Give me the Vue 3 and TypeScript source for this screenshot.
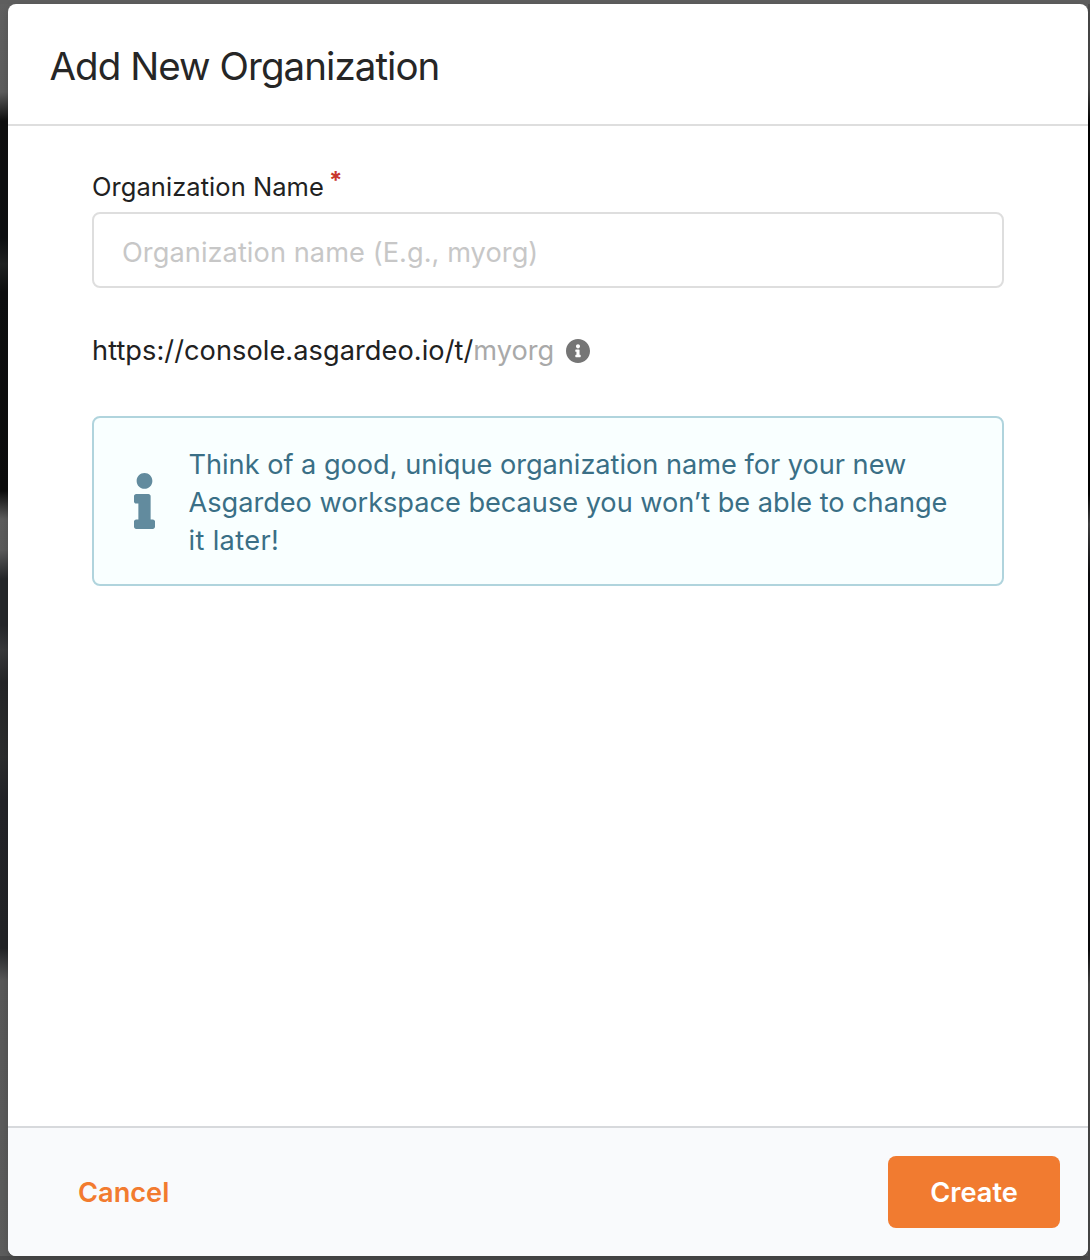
<script setup lang="ts">
import { ref } from 'vue'

const organization = ref('')
const consoleUrl = 'https://console.asgardeo.io/t/'
</script>

<template>
  <div class="backdrop">
    <section class="modal" role="dialog" aria-labelledby="modal-title">
      <header class="modal-header">
        <h1 id="modal-title">Add New Organization</h1>
      </header>
      <div class="modal-body">
        <label class="field-label" for="organization">Organization Name<span class="required">*</span></label>
        <input
          id="organization"
          v-model="organization"
          class="field-input"
          type="text"
          placeholder="Organization name (E.g., myorg)"
        />
        <div class="url">
          <span>{{ consoleUrl }}</span><span class="url-name">{{ organization || 'myorg' }}</span>
          <svg class="url-info" viewBox="8 8 496 496" aria-hidden="true">
            <path d="M256 8C119.043 8 8 119.083 8 256c0 136.997 111.043 248 248 248s248-111.003 248-248C504 119.083 392.957 8 256 8zm0 110c23.196 0 42 18.804 42 42s-18.804 42-42 42-42-18.804-42-42 18.804-42 42-42zm56 254c0 6.627-5.373 12-12 12h-88c-6.627 0-12-5.373-12-12v-24c0-6.627 5.373-12 12-12h12v-64h-12c-6.627 0-12-5.373-12-12v-24c0-6.627 5.373-12 12-12h64c6.627 0 12 5.373 12 12v100h12c6.627 0 12 5.373 12 12v24z" />
          </svg>
        </div>
        <div class="message">
          <svg class="message-icon" viewBox="0 0 192 512" aria-hidden="true">
            <path d="M20 424.229h20V279.771H20c-11.046 0-20-8.954-20-20V212c0-11.046 8.954-20 20-20h112c11.046 0 20 8.954 20 20v212.229h20c11.046 0 20 8.954 20 20V492c0 11.046-8.954 20-20 20H20c-11.046 0-20-8.954-20-20v-47.771c0-11.046 8.954-20 20-20zM96 0C56.235 0 24 32.235 24 72s32.235 72 72 72 72-32.235 72-72S135.764 0 96 0z" />
          </svg>
          <p>
            Think of a good, unique organization name for your new<br />
            Asgardeo workspace because you won’t be able to change<br />
            <span class="message-end">it later!</span>
          </p>
        </div>
      </div>
      <footer class="modal-footer">
        <button type="button" class="cancel">Cancel</button>
        <button type="button" class="create">Create</button>
      </footer>
    </section>
  </div>
</template>

<style>
body {
  margin: 0;
}
</style>

<style scoped>
.backdrop {
  box-sizing: border-box;
  width: 1090px;
  height: 1260px;
  padding: 4px 2px 4px 8px;
  overflow: hidden;
  font-family: Inter, 'Noto Sans', sans-serif;
  font-size: 27.2px;
  background:
    linear-gradient(#5e5e5e, #5e5e5e) 0 0 / 1090px 4px no-repeat,
    linear-gradient(#4b4b4b, #4b4b4b) 0 1256px / 1090px 4px no-repeat,
    linear-gradient(
        #4d4d4d 0,
        #4a4a4a 88px,
        #020202 122px,
        #020202 494px,
        #454546 524px,
        #0d0d10 574px,
        #0b0b0d 950px,
        #464646 984px,
        #4b4b4b 1260px
      )
      1088px 0 / 2px 1260px no-repeat,
    linear-gradient(
      #606060 0,
      #5c5c5c 92px,
      #0f0f0f 121px,
      #0d0f11 238px,
      #202222 264px,
      #0e0f10 292px,
      #0c0c0c 491px,
      #5c5c5c 519px,
      #5a5a5a 550px,
      #25272a 579px,
      #25272a 625px,
      #38393b 650px,
      #252628 682px,
      #2c2d2e 757px,
      #232428 800px,
      #222326 948px,
      #585858 981px,
      #5c5c5c 1260px
    );
}

.modal {
  display: flex;
  flex-direction: column;
  height: 1252px;
  overflow: hidden;
  border-radius: 8px;
  background: #fff;
  box-shadow: 1px 3px 8px rgba(0, 0, 0, 0.18);
}

.modal-header {
  box-sizing: border-box;
  height: 122px;
  padding: 37px 41.5px 0;
  border-bottom: 2px solid #dedede;
}

h1 {
  margin: 0;
  font-size: 38.5px;
  font-weight: 400;
  line-height: 50px;
  letter-spacing: -0.95px;
  color: #262626;
}

.modal-body {
  flex: 1;
  display: flex;
  flex-direction: column;
  padding: 46px 84px 0;
}

.field-label {
  display: flex;
  height: 40px;
  font-size: 25.5px;
  line-height: 30px;
  letter-spacing: 0.05px;
  color: #212121;
}

.required {
  margin-left: 5px;
  font-size: 24px;
  font-weight: 700;
  line-height: 17px;
  color: #c8372d;
}

.field-input {
  box-sizing: border-box;
  width: 100%;
  height: 76px;
  padding: 4px 28px 0;
  border: 2px solid #dedede;
  border-radius: 8px;
  outline: none;
  background: #fff;
  font: inherit;
  letter-spacing: 0.06px;
  color: #212121;
}

.field-input::placeholder {
  color: #c7c7c7;
  opacity: 1;
}

.url {
  display: flex;
  align-items: center;
  height: 38px;
  margin-top: 44px;
  line-height: 36px;
  letter-spacing: 0.05px;
  white-space: pre;
  color: #212121;
}

.url-name {
  letter-spacing: 0;
  color: #a9a9a9;
}

.url-info {
  width: 24px;
  height: 24px;
  margin-left: 12px;
  fill: #757575;
}

.message {
  box-sizing: border-box;
  display: flex;
  align-items: center;
  height: 170px;
  margin-top: 46px;
  padding: 0 40px;
  border: 2px solid #b0d4dd;
  border-radius: 8px;
  background: #f9ffff;
  color: #3a6f86;
}

.message-icon {
  flex: none;
  width: 21px;
  height: 56px;
  margin-right: 33.5px;
  fill: #628b9e;
}

.message p {
  margin: 0;
  padding-top: 3px;
  line-height: 38px;
  letter-spacing: -0.03px;
  white-space: nowrap;
}

.message-end {
  letter-spacing: 0.35px;
}

.modal-footer {
  box-sizing: border-box;
  display: flex;
  align-items: center;
  justify-content: space-between;
  height: 130px;
  padding: 0 28px;
  border-top: 2px solid #d7d9dc;
  background: #f9fafc;
}

.modal-footer button {
  height: 72px;
  padding: 0 42px;
  border: 0;
  border-radius: 8px;
  font: inherit;
  font-weight: 600;
}

.modal-footer .cancel {
  background: transparent;
  color: #f27b2f;
}

.modal-footer .create {
  width: 172px;
  padding: 0;
  background: #f17b30;
  color: #fff;
}
</style>
